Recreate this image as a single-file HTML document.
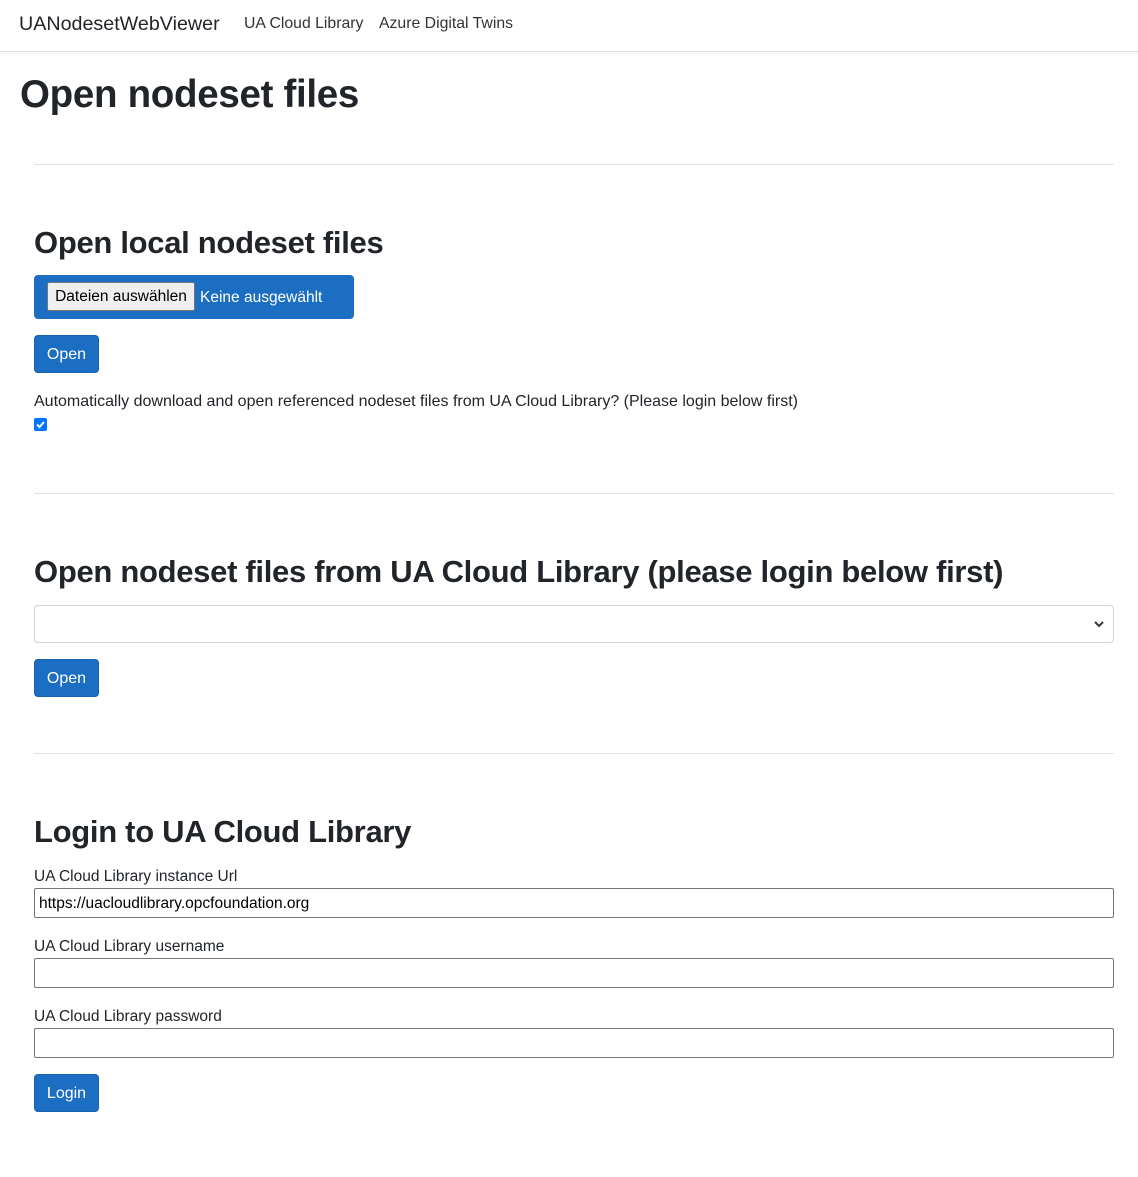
<!DOCTYPE html>
<html><head><meta charset="utf-8"><style>
body{margin:0;font-family:"Liberation Sans",sans-serif;color:#212529;background:#fff;font-size:16px}
.nav{height:51px;border-bottom:1px solid #ddd;box-shadow:0 2px 4px rgba(0,0,0,.05);position:relative}
.brand{position:absolute;left:19px;top:13px;font-size:19.7px}
.l1{position:absolute;left:244px;top:15px;color:#333;font-size:15.8px}
.l2{position:absolute;left:379px;top:15px;color:#333;font-size:15.8px}
.a{position:absolute}
h1,h2{margin:0;font-weight:bold;position:absolute;white-space:nowrap;letter-spacing:-.3px}
h1{font-size:38.5px;left:20px;top:73px}
h2{font-size:31px;left:34px}
hr{position:absolute;left:34px;width:1080px;border:0;border-top:1px solid #e2e2e2;margin:0}
.btn{position:absolute;left:34px;width:65px;height:38px;background:#1b6ec2;border:1px solid #1861ac;border-radius:4px;color:#fff;box-sizing:border-box;text-align:center;line-height:38px;font-size:16px}
.file{position:absolute;left:34px;top:275px;width:320px;height:44px;background:#1b6ec2;border-radius:4px}
.fb{position:absolute;left:13px;top:7px;width:148px;height:29px;background:#efefef;border:1px solid #767676;border-radius:2px;box-sizing:border-box;font-size:15.5px;line-height:28px;text-align:center;color:#000}
.ft{position:absolute;left:166px;top:14px;color:#fff;font-size:15.5px}
.inp{position:absolute;left:34px;width:1080px;height:30px;border:1px solid #767676;border-radius:2px;box-sizing:border-box;font-size:15.5px;padding:6px 4px;color:#000}
.lbl{position:absolute;left:34px;font-size:15.5px}
</style></head><body>
<div class="nav"><span class="brand">UANodesetWebViewer</span><span class="l1">UA Cloud Library</span><span class="l2">Azure Digital Twins</span></div>
<h1>Open nodeset files</h1>
<hr style="top:164px">
<h2 style="top:225px">Open local nodeset files</h2>
<div class="file"><div class="fb">Dateien auswählen</div><span class="ft">Keine ausgewählt</span></div>
<div class="btn" style="top:335px">Open</div>
<div class="lbl" style="top:393px;font-size:16px">Automatically download and open referenced nodeset files from UA Cloud Library? (Please login below first)</div>
<div class="a" style="left:34px;top:418px;width:13px;height:13px;background:#0075ff;border-radius:2px"><svg width="13" height="13"><path d="M3 6.5l2.5 2.5 4.5-5" stroke="#fff" stroke-width="2" fill="none"/></svg></div>
<hr style="top:493px">
<h2 style="top:554px">Open nodeset files from UA Cloud Library (please login below first)</h2>
<div class="a" style="left:34px;top:605px;width:1080px;height:38px;border:1px solid #ced4da;border-radius:4px;box-sizing:border-box"><svg style="position:absolute;right:8px;top:13px" width="12" height="10"><path d="M2 3l4 4 4-4" stroke="#343a40" stroke-width="2" fill="none"/></svg></div>
<div class="btn" style="top:659px">Open</div>
<hr style="top:753px">
<h2 style="top:814px">Login to UA Cloud Library</h2>
<div class="lbl" style="top:868px">UA Cloud Library instance Url</div>
<div class="inp" style="top:888px">https://uacloudlibrary.opcfoundation.org</div>
<div class="lbl" style="top:938px">UA Cloud Library username</div>
<div class="inp" style="top:958px"></div>
<div class="lbl" style="top:1008px">UA Cloud Library password</div>
<div class="inp" style="top:1028px"></div>
<div class="btn" style="top:1074px">Login</div>
</body></html>
